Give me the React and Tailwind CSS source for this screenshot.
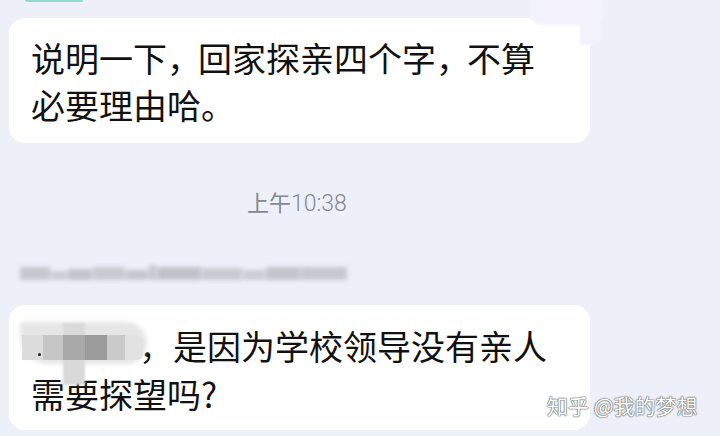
export default function App() {
  const cjk = { fontFamily: '"Noto Sans CJK SC", "Noto Sans", sans-serif' };
  return (
    <div
      className="relative w-[720px] h-[436px] overflow-hidden bg-[#edf0f8] flex flex-col text-[#111]"
      style={cjk}
    >
      {/* top strip */}
      <div className="h-[18px] pl-[25px] flex items-start">
        <div className="w-[58px] h-[2px] rounded-b bg-[#8fd9cf]" />
      </div>

      {/* bubble 1 */}
      <div className="ml-[9px] w-[581px] h-[125px] rounded-[16px] bg-white pl-[22px] pt-[16px] text-[34px] leading-[47px]">
        <div className="whitespace-nowrap">
          说明一下<span className="-mr-[3px]">，</span>回家探亲四个字<span className="-mr-[3px]">，</span>不算
        </div>
        <div>必要理由哈。</div>
      </div>

      {/* timestamp */}
      <div className="mt-[44px] h-[28px] flex items-baseline pl-[247px] text-[22px] leading-[28px] text-[#858891]">
        <span>上午</span>
        <span className="text-[23px] font-light" style={{ fontFamily: 'Roboto, "Noto Sans", sans-serif' }}>10:38</span>
      </div>

      {/* blurred name */}
      <div className="mt-[50px] ml-[20px] h-[15px] w-[327px] flex items-end gap-[1px] blur-[2px]">
        <div className="h-[13px] w-[30px] bg-[#c5c7ce]" />
        <div className="h-[9px] w-[16px] bg-[#cacdd3]" />
        <div className="h-[11px] w-[24px] bg-[#c2c4cb]" />
        <div className="h-[13px] w-[32px] bg-[#c8cad1]" />
        <div className="h-[10px] w-[22px] bg-[#c4c6cd]" />
        <div className="h-[15px] w-[7px] bg-[#c5c7ce]" />
        <div className="h-[13px] w-[44px] bg-[#c0c2c9]" />
        <div className="h-[12px] w-[40px] bg-[#c8cad1]" />
        <div className="h-[10px] w-[22px] bg-[#cbcdd4]" />
        <div className="h-[13px] w-[34px] bg-[#c2c4cb]" />
        <div className="h-[13px] flex-1 bg-[#c6c8cf]" />
      </div>

      {/* bubble 2 */}
      <div className="mt-[25px] ml-[9px] w-[581px] h-[125px] rounded-[16px] bg-white pl-[22px] pt-[17px] text-[34px] leading-[48px]">
        <div className="whitespace-nowrap flex">
          <span className="relative inline-block w-[108px] h-[48px]">
            {/* mosaic cloud */}
            <span className="absolute left-[-11px] top-[0px] w-[127px] h-[42px] rounded-r-[22px] rounded-bl-[30px] bg-[#e6e6e6] blur-[2px]" />
            <span className="absolute left-[32px] top-[1px] w-[22px] h-[62px] bg-[#d9d9d9] blur-[1px]" />
            <span className="absolute left-[-9px] top-[13px] w-[21px] h-[25px] bg-[#dcdcdc]" />
            <span className="absolute left-[12px] top-[13px] w-[20px] h-[25px] bg-[#c6c6c6]" />
            <span className="absolute left-[32px] top-[13px] w-[22px] h-[25px] bg-[#a9a9a9]" />
            <span className="absolute left-[54px] top-[13px] w-[22px] h-[25px] bg-[#9b9b9b]" />
            <span className="absolute left-[76px] top-[13px] w-[18px] h-[25px] bg-[#cacaca]" />
            <span className="absolute left-[94px] top-[13px] w-[18px] h-[25px] bg-[#e2e2e2] rounded-r-[6px]" />
            <span className="absolute left-[7px] top-[31px] w-[3px] h-[3px] rounded-full bg-[#222]" />
          </span>
          <span>，是因为学校领导没有亲人</span>
        </div>
        <div>需要探望吗?</div>
      </div>

      {/* watermark */}
      <div className="absolute left-[547px] top-[392px] text-[21px] leading-[26px] text-white whitespace-nowrap [text-shadow:0_0_1px_#555,0_0_1px_#555,0_0_2px_#888]">
        知乎 @我的梦想
      </div>

      {/* faint blob top-right */}
      <div className="absolute left-[530px] top-[-10px] w-[73px] h-[35px] rounded-[10px] bg-[#f4f3fd] blur-[1px]" />
      <div className="absolute left-[580px] top-[20px] w-[22px] h-[25px] rounded-br-[10px] bg-[#f2f1fc] blur-[1px]" />
    </div>
  );
}
